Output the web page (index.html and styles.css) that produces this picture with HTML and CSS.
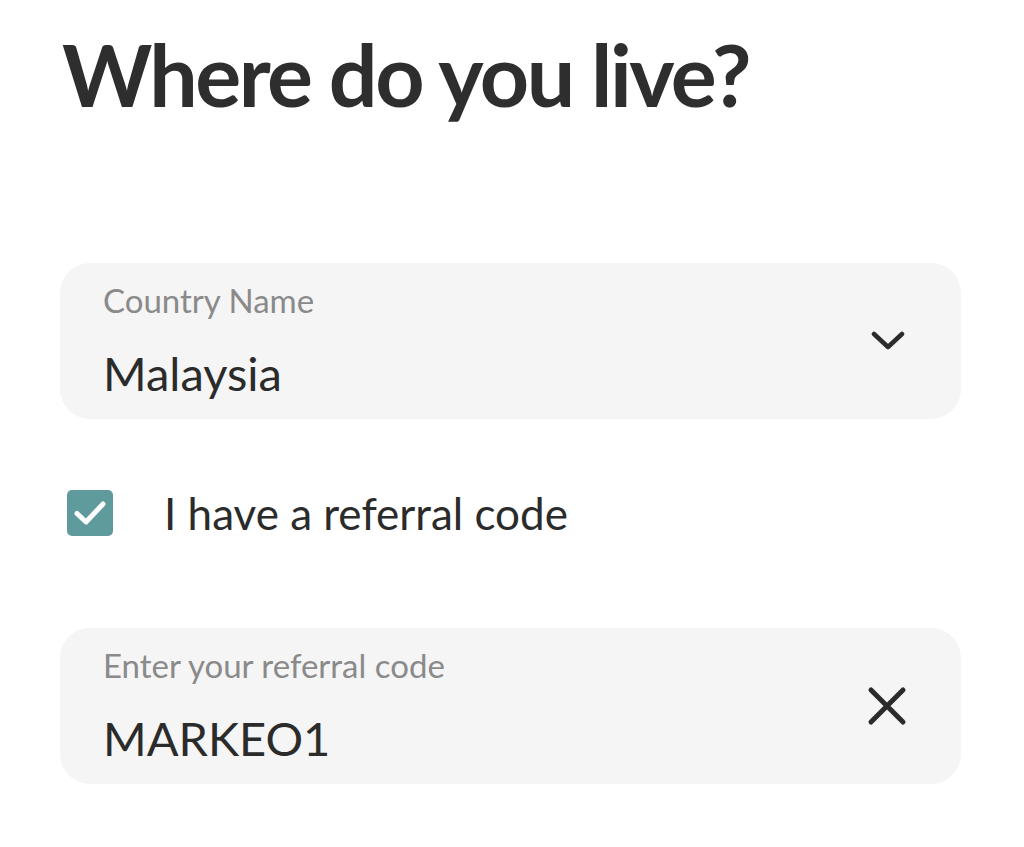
FILE: index.html
```html
<!DOCTYPE html>
<html>
<head>
<meta charset="utf-8">
<link rel="stylesheet" href="styles.css">
</head>
<body>
<div class="page">
  <h1 class="title">Where do you live?</h1>
  <div class="field field-country">
    <div class="field-text">
      <div class="label">Country Name</div>
      <div class="value">Malaysia</div>
    </div>
    <svg class="icon chevron" width="34" height="20" viewBox="0 0 34 20"><path d="M3 3 L17 16 L31 3" fill="none" stroke="#2b2b2b" stroke-width="4.5" stroke-linecap="round" stroke-linejoin="round"/></svg>
  </div>
  <div class="check-row">
    <div class="checkbox">
      <svg width="46" height="46" viewBox="0 0 46 46"><path d="M10 23.5 L19 32 L36 14" fill="none" stroke="#fff" stroke-width="5" stroke-linecap="round" stroke-linejoin="round"/></svg>
    </div>
    <div class="check-label">I have a referral code</div>
  </div>
  <div class="field field-code">
    <div class="field-text">
      <div class="label">Enter your referral code</div>
      <div class="value">MARKEO1</div>
    </div>
    <svg class="icon close" width="40" height="40" viewBox="0 0 40 40"><path d="M4 4 L36 36 M36 4 L4 36" fill="none" stroke="#2b2b2b" stroke-width="5" stroke-linecap="round"/></svg>
  </div>
</div>
</body>
</html>
```

FILE: styles.css
```css
html, body {
  margin: 0;
  padding: 0;
  background: #ffffff;
}
.page {
  width: 901px;
  padding: 0 0 0 60px;
  font-family: "Lato", "Open Sans", sans-serif;
  color: #2d2d2d;
}
.title {
  margin: 0;
  padding-top: 24px;
  font-size: 86px;
  line-height: 100px;
  font-weight: 700;
  color: #2e2e2e;
  letter-spacing: -2.5px;
  padding-left: 2px;
}
.field {
  margin-top: 139px;
  height: 156px;
  box-sizing: border-box;
  background: #f5f5f5;
  border-radius: 30px;
  display: flex;
  align-items: center;
  justify-content: space-between;
  padding: 0 56px 0 43px;
}
.field-text {
  display: flex;
  flex-direction: column;
}
.label {
  font-size: 33px;
  line-height: 40px;
  color: #8a8a8a;
}
.value {
  font-size: 47px;
  line-height: 60px;
  color: #2b2b2b;
  margin-top: 23px;
}
.check-row {
  display: flex;
  align-items: center;
  margin-top: 71px;
  padding-left: 7px;
  height: 46px;
}
.checkbox {
  width: 46px;
  height: 46px;
  border-radius: 5px;
  background: #5f9b9d;
  display: flex;
}
.check-label {
  margin-left: 51px;
  font-size: 44px;
  color: #2b2b2b;
}
.field-code {
  margin-top: 92px;
}
.field-code .icon {
  margin-right: -2px;
}
```
